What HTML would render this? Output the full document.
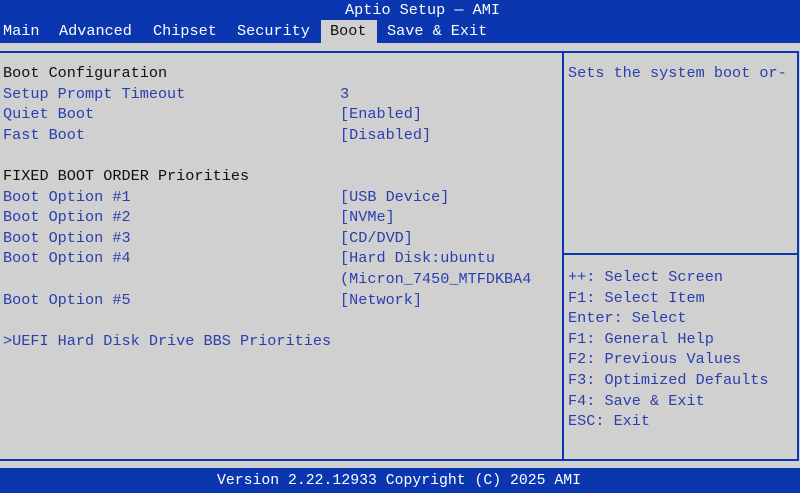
<!DOCTYPE html>
<html><head><style>
body{margin:0;width:800px;height:493px;background:#d0d0d0;position:relative;overflow:hidden;font-family:"Liberation Mono",monospace;font-size:15.2px;}
.a{position:absolute;white-space:pre;line-height:20px;}
.w{color:#fff}.k{color:#111}.b{color:#2a3eae}
</style></head><body>
<div style="position:absolute;left:0;top:0;width:800px;height:43px;background:#0a36b0"></div>
<div style="position:absolute;left:321px;top:20px;width:56px;height:23px;background:#d0d0d0"></div>
<div class="a w" style="left:345px;top:0">Aptio Setup — AMI</div>
<div class="a w" style="left:3px;top:21px">Main</div>
<div class="a w" style="left:59px;top:21px">Advanced</div>
<div class="a w" style="left:153px;top:21px">Chipset</div>
<div class="a w" style="left:237px;top:21px">Security</div>
<div class="a k" style="left:330px;top:21px">Boot</div>
<div class="a w" style="left:387px;top:21px">Save &amp; Exit</div>
<div style="position:absolute;left:0;top:51px;width:799px;border-top:2px solid #0a36b0;border-right:2px solid #0a36b0;height:410px;border-bottom:2px solid #0a36b0;box-sizing:border-box"></div>
<div style="position:absolute;left:562px;top:52px;width:2px;height:408px;background:#0a36b0"></div>
<div style="position:absolute;left:564px;top:253px;width:234px;height:1.5px;background:#0a36b0"></div>
<div style="position:absolute;left:0;top:468px;width:800px;height:25px;background:#0a36b0"></div>
<div class="a w" style="left:217px;top:471px;font-size:14.8px">Version 2.22.12933 Copyright (C) 2025 AMI</div>
<div class="a" style="left:3px;top:63px;line-height:20.6px"><span class="k">Boot Configuration</span>
<span class="b">Setup Prompt Timeout</span>
<span class="b">Quiet Boot</span>
<span class="b">Fast Boot</span>

<span class="k">FIXED BOOT ORDER Priorities</span>
<span class="b">Boot Option #1</span>
<span class="b">Boot Option #2</span>
<span class="b">Boot Option #3</span>
<span class="b">Boot Option #4</span>

<span class="b">Boot Option #5</span>

<span class="b">&gt;UEFI Hard Disk Drive BBS Priorities</span></div>
<div class="a b" style="left:340px;top:63px;line-height:20.6px">
3
[Enabled]
[Disabled]


[USB Device]
[NVMe]
[CD/DVD]
[Hard Disk:ubuntu
(Micron_7450_MTFDKBA4
[Network]</div>
<div class="a b" style="left:568px;top:63px">Sets the system boot or-</div>
<div class="a b" style="left:568px;top:267px;line-height:20.6px">++: Select Screen
F1: Select Item
Enter: Select
F1: General Help
F2: Previous Values
F3: Optimized Defaults
F4: Save &amp; Exit
ESC: Exit</div>
</body></html>
